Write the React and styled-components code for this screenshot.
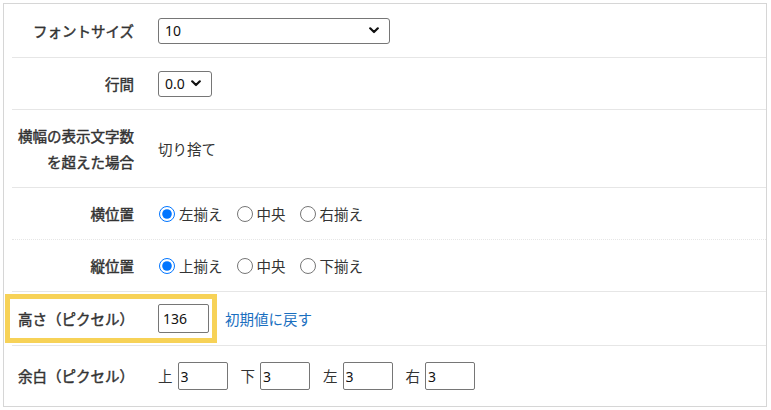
import React from "react";
import styled, { createGlobalStyle } from "styled-components";

const Global = createGlobalStyle`
  html, body { margin: 0; padding: 0; background: #fff; }
  body { font-family: "Noto Sans CJK JP", "Noto Sans", sans-serif; color: #333; }
`;

const Page = styled.div`
  padding: 3px 4px 0 3px;
  width: 771px;
  box-sizing: border-box;
`;

const Panel = styled.div`
  border: 1px solid #d6d6d6;
  height: 404px;
  box-sizing: border-box;
  display: flex;
  flex-direction: column;
`;

const Row = styled.div`
  position: relative;
  margin-left: 8px;
  height: ${(p) => p.$h}px;
  flex: ${(p) => (p.$last ? 1 : "none")};
  box-sizing: border-box;
  border-bottom: ${(p) => (p.$last ? "none" : `1px ${p.$dotted ? "dotted" : "solid"} #e6e6e6`)};
  display: grid;
  grid-template-columns: 122px 1fr;
  column-gap: 24px;
  align-items: center;
`;

const Label = styled.div`
  font-size: 14.5px;
  font-weight: 400;
  -webkit-text-stroke: 0.45px #333;
  line-height: 26px;
  text-align: right;
  color: #333;
  white-space: nowrap;
`;

const Value = styled.div`
  display: flex;
  align-items: center;
  font-size: 14.5px;
  color: #333;
  line-height: 26px;
`;

const SelectBox = styled.div`
  width: ${(p) => p.$w}px;
  height: 26px;
  box-sizing: border-box;
  border: 1px solid #767676;
  border-radius: 3px;
  display: flex;
  align-items: center;
  justify-content: space-between;
  padding: 0 10px 0 6px;
  font-family: "Noto Sans", "Noto Sans CJK JP", sans-serif;
  font-size: 14px;
  color: #111;
`;

const Chevron = () => (
  <svg width="10" height="7" viewBox="0 0 10 7">
    <path d="M1.2 1.3 L5 5 L8.8 1.3" fill="none" stroke="#111" strokeWidth="2.2" strokeLinecap="round" strokeLinejoin="round" />
  </svg>
);

const RadioGroup = styled.div`
  display: flex;
  align-items: center;
  gap: 13px;
`;

const RadioLabel = styled.label`
  display: flex;
  align-items: center;
  gap: 4px;
  font-size: 14.5px;
  color: #333;
`;

const Radio = styled.input.attrs({ type: "radio" })`
  margin: 0 0 0 1px;
  width: 16px;
  height: 16px;
  accent-color: #0075ff;
`;

const NumInput = styled.input`
  width: ${(p) => p.$w}px;
  height: ${(p) => p.$hgt}px;
  box-sizing: border-box;
  border: 1px solid #767676;
  border-radius: 2px;
  padding: 0 ${(p) => p.$pad}px;
  font-family: "Noto Sans", "Noto Sans CJK JP", sans-serif;
  font-size: 14px;
  color: #111;
  outline: none;
`;

const Link = styled.a`
  margin-left: 16px;
  color: #1a6fbf;
  font-size: 14.5px;
  text-decoration: none;
`;

const MarginItem = styled.span`
  display: flex;
  align-items: center;
  gap: 5px;
  margin-right: 13px;
  font-size: 14.5px;
  color: #333;
`;

const Highlight = styled.div`
  position: absolute;
  left: -7px;
  top: 2px;
  width: 212px;
  height: 49px;
  box-sizing: border-box;
  border: 5px solid #f7d257;
  pointer-events: none;
`;

export default function App() {
  return (
    <Page>
      <Global />
      <Panel>
        <Row $h={54}>
          <Label>フォントサイズ</Label>
          <Value>
            <SelectBox $w={232}>
              <span>10</span>
              <Chevron />
            </SelectBox>
          </Value>
        </Row>
        <Row $h={52}>
          <Label>行間</Label>
          <Value>
            <SelectBox $w={54}>
              <span>0.0</span>
              <Chevron />
            </SelectBox>
          </Value>
        </Row>
        <Row $h={78}>
          <Label>
            横幅の表示文字数
            <br />
            を超えた場合
          </Label>
          <Value>切り捨て</Value>
        </Row>
        <Row $h={52} $dotted>
          <Label>横位置</Label>
          <Value>
            <RadioGroup>
              <RadioLabel><Radio name="h" defaultChecked />左揃え</RadioLabel>
              <RadioLabel><Radio name="h" />中央</RadioLabel>
              <RadioLabel><Radio name="h" />右揃え</RadioLabel>
            </RadioGroup>
          </Value>
        </Row>
        <Row $h={52}>
          <Label>縦位置</Label>
          <Value>
            <RadioGroup>
              <RadioLabel><Radio name="v" defaultChecked />上揃え</RadioLabel>
              <RadioLabel><Radio name="v" />中央</RadioLabel>
              <RadioLabel><Radio name="v" />下揃え</RadioLabel>
            </RadioGroup>
          </Value>
        </Row>
        <Row $h={54}>
          <Label>高さ（ピクセル）</Label>
          <Value>
            <NumInput $w={51} $hgt={29} $pad={4} defaultValue="136" />
            <Link href="#">初期値に戻す</Link>
          </Value>
          <Highlight />
        </Row>
        <Row $last>
          <Label>余白（ピクセル）</Label>
          <Value>
            <MarginItem>上<NumInput $w={50} $hgt={28} $pad={2} defaultValue="3" /></MarginItem>
            <MarginItem>下<NumInput $w={50} $hgt={28} $pad={2} defaultValue="3" /></MarginItem>
            <MarginItem>左<NumInput $w={50} $hgt={28} $pad={2} defaultValue="3" /></MarginItem>
            <MarginItem>右<NumInput $w={50} $hgt={28} $pad={2} defaultValue="3" /></MarginItem>
          </Value>
        </Row>
      </Panel>
    </Page>
  );
}
